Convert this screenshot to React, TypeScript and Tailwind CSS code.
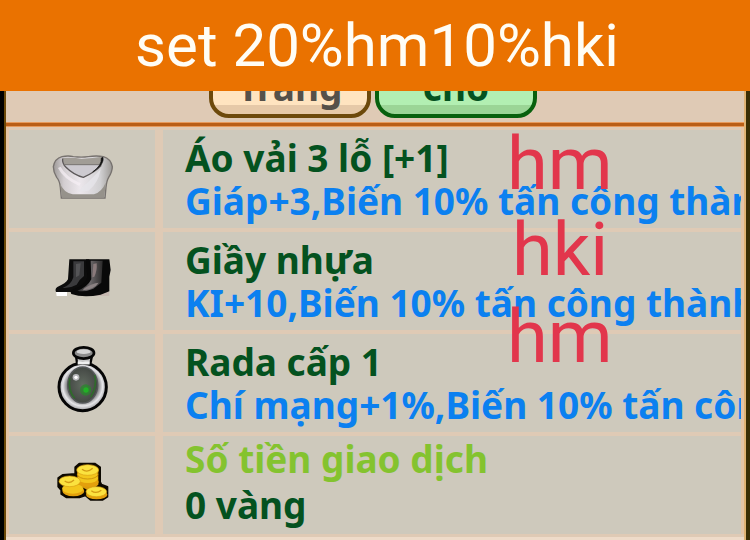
import type { ReactNode } from "react";

function ShirtIcon() {
  return (
    <svg width="65" height="60" viewBox="60 57 195 180" aria-hidden="true">
      <defs>
        <linearGradient id="cloth" x1="0" y1="0" x2="1" y2="0">
          <stop offset="0" stopColor="#9d9997" />
          <stop offset="0.18" stopColor="#d3ced1" />
          <stop offset="0.45" stopColor="#ece7ec" />
          <stop offset="0.8" stopColor="#d0cfd1" />
          <stop offset="1" stopColor="#9b9894" />
        </linearGradient>
      </defs>
      <path
        d="M96 80 Q115 76 130 80 Q155 83 175 80 Q200 76 220 80 Q242 86 247 110 Q247 124 236 142 Q230 152 228 172 L225 204 L94 204 L91 172 Q89 152 80 142 Q70 126 70 110 Q74 86 96 80Z"
        fill="url(#cloth)"
        stroke="#77726f"
        strokeWidth="4"
      />
      <path d="M90 160 Q100 188 128 193 L192 193 Q216 185 227 158 L223 203 L96 203Z" fill="#96928b" />
      <path d="M98 84 Q130 82 155 86 Q190 84 216 80 L216 104 L100 104Z" fill="#a19d96" />
      <path d="M101 104 L214 104 Q192 130 158 142 Q118 130 101 104Z" fill="#cdcad0" />
      <path d="M98 86 Q96 100 108 112 Q132 136 160 142 Q196 126 214 106" fill="none" stroke="#5c5859" strokeWidth="4" />
      <path d="M100 104 L208 104" stroke="#76726f" strokeWidth="3" />
      <path d="M219 82 Q222 98 206 112 L188 126 Q216 106 214 84Z" fill="#111" stroke="#111" strokeWidth="2" />
      <path d="M142 186 Q178 155 212 118 Q206 158 176 182Z" fill="#e6e5ea" opacity="0.8" />
      <path d="M88 112 Q102 142 150 164" fill="none" stroke="#f7eff5" strokeWidth="9" opacity="0.7" />
    </svg>
  );
}

function BootsIcon() {
  return (
    <svg width="65" height="60" viewBox="60 33 195 180" aria-hidden="true">
      <defs>
        <linearGradient id="leather" x1="0" y1="0" x2="1" y2="0">
          <stop offset="0" stopColor="#2a2a2b" />
          <stop offset="0.5" stopColor="#6c686a" />
          <stop offset="1" stopColor="#2c2b2b" />
        </linearGradient>
      </defs>
      <path d="M78 154 h33 v14 h-31Z" fill="#fff" />
      <path d="M200 154 h38 v14 h-48Z" fill="#c7b9b1" />
      <path d="M118 58 H178 V130 L150 156 H78 Q74 146 82 141 Q108 130 114 118Z" fill="#0c0c0c" />
      <path d="M130 64 H162 V108 Q148 118 140 134 Q118 146 98 144 Q124 134 130 112Z" fill="#3a3a3c" />
      <path d="M138 72 L152 70 L148 106 L138 112Z" fill="#545456" />
      <path d="M168 58 H238 L242 90 L238 110 V154 L212 164 Q160 174 124 162 Q118 152 132 146 Q164 136 172 112Z" fill="#090909" />
      <path d="M182 62 H218 L214 128 L190 146 Q160 158 142 152 Q172 142 184 118Z" fill="url(#leather)" />
      <path d="M190 72 L200 70 Q202 92 193 110 L187 112Z" fill="#8a7a7b" />
      <path d="M164 144 Q186 130 206 128 Q194 147 158 151Z" fill="#8b8283" />
    </svg>
  );
}

function RadarIcon() {
  return (
    <svg width="65" height="80" viewBox="30 24 195 240" aria-hidden="true">
      <defs>
        <radialGradient id="glass" cx="0.5" cy="0.5" r="0.55">
          <stop offset="0" stopColor="#616b60" />
          <stop offset="0.7" stopColor="#4b504b" />
          <stop offset="1" stopColor="#3d443d" />
        </radialGradient>
        <radialGradient id="rim" cx="0.5" cy="0.48" r="0.5">
          <stop offset="0.6" stopColor="#5f5f61" />
          <stop offset="0.84" stopColor="#e6e6e9" />
          <stop offset="1" stopColor="#a5a5a8" />
        </radialGradient>
      </defs>
      <path d="M108 62 L112 92 H150 L156 62Z" fill="#c9c9c9" stroke="#050505" strokeWidth="7" />
      <ellipse cx="131" cy="54" rx="31" ry="17" fill="#8c8c8c" stroke="#050505" strokeWidth="8" />
      <ellipse cx="131" cy="50" rx="21" ry="7" fill="#d4d4d4" />
      <circle cx="128" cy="156" r="71" fill="url(#rim)" stroke="#050505" strokeWidth="9" />
      <path d="M113 84 H149" stroke="#f0f0f0" strokeWidth="9" />
      <ellipse cx="128" cy="150" rx="45" ry="54" fill="url(#glass)" stroke="#55585a" strokeWidth="4" />
      <path d="M89 130 Q84 166 104 190 M164 120 Q172 154 152 186" fill="none" stroke="#2f6b2b" strokeWidth="5" />
      <circle cx="137" cy="165" r="17" fill="#278a2a" opacity="0.7" />
      <circle cx="138" cy="165" r="8" fill="#22b026" />
      <circle cx="108" cy="127" r="10" fill="#b7b7bb" />
      <circle cx="108" cy="127" r="5" fill="#fff" />
    </svg>
  );
}

function CoinsIcon() {
  return (
    <svg width="65" height="60" viewBox="30 31 195 180" aria-hidden="true">
      <path
        d="M118 57 H164 L180 68 V112 L184 120 L202 127 V156 L188 165 H152 L136 152 L118 158 H80 L64 148 V136 L55 126 V100 L68 91 L106 88 V68Z"
        fill="#0c0800"
        stroke="#0c0800"
        strokeWidth="6"
        strokeLinejoin="round"
      />
      <path d="M112 76 H175 V120 L150 140 L112 120Z" fill="#dc9a0c" />
      <g fill="#e3a00c">
        <ellipse cx="145" cy="112" rx="31" ry="15" />
        <ellipse cx="100" cy="139" rx="33" ry="16" />
        <ellipse cx="170" cy="150" rx="32" ry="14" />
      </g>
      <g fill="#f3c61c">
        <ellipse cx="144" cy="101" rx="30" ry="14" />
        <ellipse cx="143" cy="89" rx="31" ry="14" stroke="#b97c06" strokeWidth="2" />
        <ellipse cx="98" cy="132" rx="32" ry="15" />
      </g>
      <g fill="#fbe23f" stroke="#d9a012" strokeWidth="2">
        <ellipse cx="143" cy="76" rx="33" ry="16" />
        <ellipse cx="89" cy="110" rx="32" ry="16" />
        <ellipse cx="169" cy="141" rx="31" ry="15" />
      </g>
      <g fill="none" stroke="#d39a14" strokeWidth="4">
        <path d="M126 74 Q142 86 158 71" />
        <path d="M74 109 Q88 119 102 106" />
        <path d="M154 138 Q168 149 184 137" />
      </g>
    </svg>
  );
}

type RowProps = {
  icon: ReactNode;
  title: string;
  detail: string;
  money?: boolean;
  note?: ReactNode;
};

function Row({ icon, title, detail, money, note }: RowProps) {
  return (
    <li className="relative flex h-[98px] gap-2">
      <div className="flex w-[146px] shrink-0 items-center justify-center bg-[#cec9bc]">{icon}</div>
      <div
        className={
          "min-w-0 flex-1 overflow-hidden whitespace-nowrap bg-[#cec9bc] pl-[22px] " +
          (money ? "leading-[46px]" : "pt-[6px] leading-[43px]")
        }
      >
        <h2 className={money ? "text-[#84c32f]" : "text-[#04521f]"}>{title}</h2>
        <p className={money ? "text-[#04521f]" : "text-[#0b80f0]"}>{detail}</p>
      </div>
      {note}
    </li>
  );
}

const noteStyle =
  "absolute z-10 font-['Roboto',sans-serif] text-[74px] font-normal leading-[74px] text-[#e2364c]";

export default function App() {
  return (
    <div className="flex min-h-screen flex-col overflow-hidden bg-[#dfcab5]">
      <header className="bg-[#ea7200] pl-1 text-center font-['Roboto',sans-serif] text-[60px] leading-[91px] text-[#fffdf5]">
        <h1>set 20%hm10%hki</h1>
      </header>

      <main className="flex flex-1 flex-col border-x-4 border-l-black border-r-[#3a2e04] font-['Noto_Sans',sans-serif] text-[37px] font-bold">
        <div className="flex flex-1 flex-col border-x-2 border-l-[#6b4808] border-r-[#e0b374]">
          <nav className="flex h-[31px] items-end justify-center gap-1 overflow-hidden pr-1 pb-1">
            <button
              type="button"
              className="flex h-[54px] w-[162px] items-end justify-center rounded-[20px] border-4 border-[#6d490b] bg-linear-to-b from-[#ffe4c0] from-80% to-[#e6c9a8] to-80% leading-[54px] text-[#555049]"
            >
              Trang
            </button>
            <button
              type="button"
              className="flex h-[54px] w-[162px] items-end justify-center rounded-[20px] border-4 border-[#08600d] bg-linear-to-b from-[#b2efb2] from-80% to-[#9bd596] to-80% leading-[54px] text-[#04521f]"
            >
              cho
            </button>
          </nav>

          <div className="h-[5px] border-y border-[#e79a5c] bg-[#b95e17]" />

          <ul className="flex flex-col gap-1 border-x-[3px] border-[#e4c5a7] pt-[3px]">
            <Row
              icon={<ShirtIcon />}
              title="Áo vải 3 lỗ [+1]"
              detail="Giáp+3,Biến 10% tấn công thành"
              note={<span className={noteStyle + " -top-[3px] left-[498px]"}>hm</span>}
            />
            <Row
              icon={<BootsIcon />}
              title="Giầy nhựa"
              detail="KI+10,Biến 10% tấn công thành"
              note={<span className={noteStyle + " -top-[19px] left-[503px]"}>hki</span>}
            />
            <Row
              icon={<RadarIcon />}
              title="Rada cấp 1"
              detail="Chí mạng+1%,Biến 10% tấn công"
              note={<span className={noteStyle + " -top-[34px] left-[498px]"}>hm</span>}
            />
            <Row icon={<CoinsIcon />} title="Số tiền giao dịch" detail="0 vàng" money />
          </ul>

          <div className="mt-[3px] flex-1 bg-[#eedbc9]" />
        </div>
      </main>
    </div>
  );
}
